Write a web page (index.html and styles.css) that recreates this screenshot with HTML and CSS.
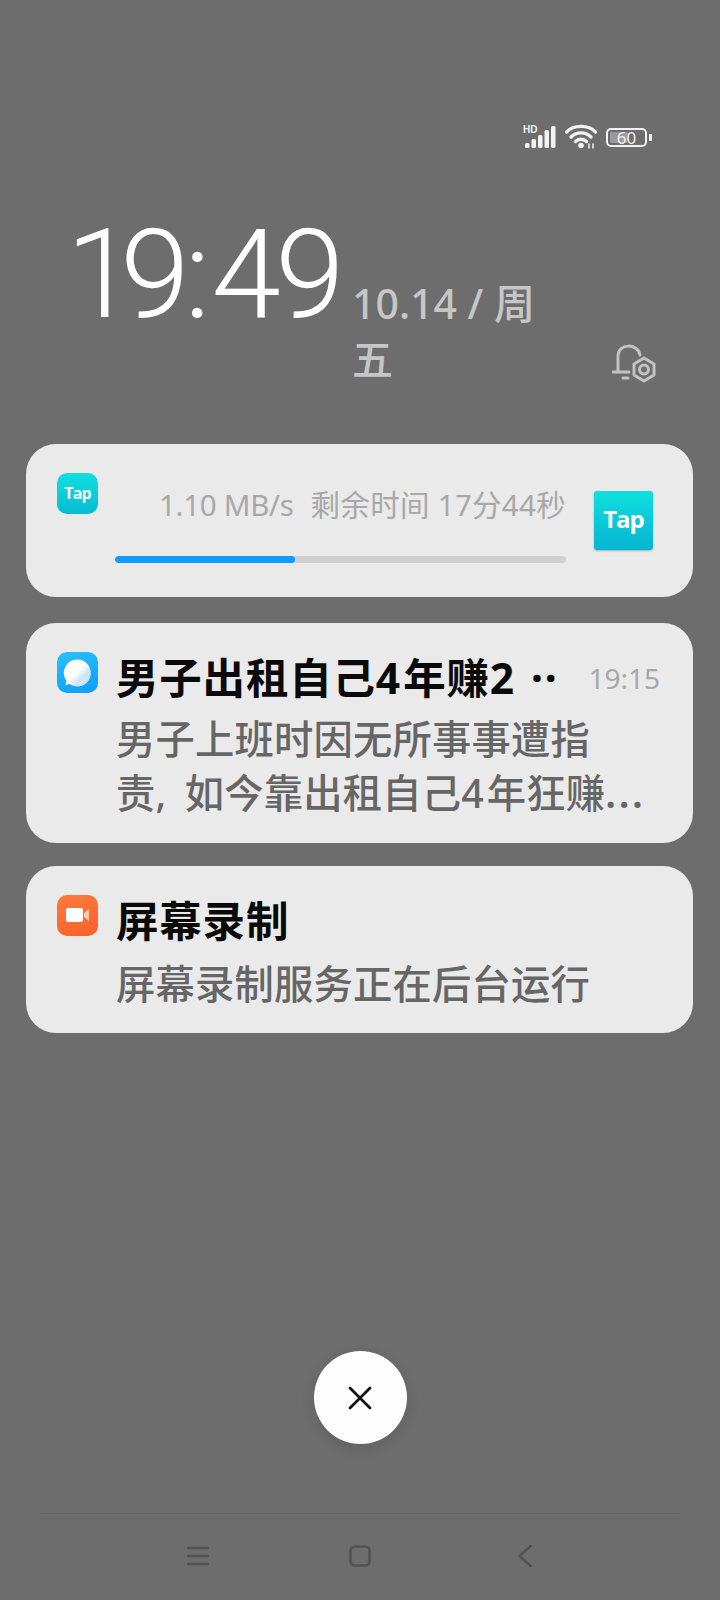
FILE: index.html
```html
<!DOCTYPE html>
<html lang="zh-CN">
  <head>
    <meta charset="UTF-8" />
    <title>通知中心</title>
    <link rel="stylesheet" href="styles.css">
  </head>
  <body>
    <div class="screen">
      <div class="status-bar">
        <svg class="signal" width="33" height="26" viewBox="0 0 33 26">
          <text x="0" y="9" class="hd">HD</text>
          <rect x="2" y="19" width="4.500" height="5" rx="1.500" />
          <rect x="8.500" y="15" width="4.500" height="9" rx="1.500" />
          <rect x="15" y="11" width="4.500" height="13" rx="1.500" />
          <rect x="21.500" y="6" width="4.500" height="18" rx="1.500" />
          <rect x="28" y="2" width="4.500" height="22" rx="1.500" />
        </svg>
        <svg class="wifi" width="32" height="26" viewBox="0 0 32 26">
          <path d="M1.500 8 C8.500 0.500 23.500 0.500 30.500 8" />
          <path d="M6 13 C11 7.500 21 7.500 26 13" />
          <path d="M10.500 17.500 C13.500 14.500 18.500 14.500 21.500 17.500" />
          <circle cx="16" cy="21.500" r="2.800" class="solid" />
          <path class="data" d="M24 20 V24 M28 20 V24" />
        </svg>
        <div class="battery">
          <div class="battery-body">
            <div class="battery-fill"></div>
            <span class="battery-num">60</span>
          </div>
          <div class="battery-tip"></div>
        </div>
      </div>

      <div class="clock-row">
        <div class="clock"><span class="clock-one">1</span>9<span class="clock-colon">:</span>49</div>
        <div class="date">10.14 / 周五</div>
        <svg class="bell" width="44" height="44" viewBox="0 0 44 44">
          <path d="M6 29 V14 C6 1 26 1 28 13" />
          <path d="M1 30 H17" />
          <path d="M11 36 H16" />
          <path d="M32 16 L42 22 V33 L32 39 L22 33 V22 Z" />
          <circle cx="32" cy="27.500" r="4.500" />
        </svg>
      </div>

      <section class="card card-download">
        <div class="app-icon tap-icon">Tap</div>
        <div class="download-main">
          <div class="download-text"><span class="speed">1.10 MB/s</span><span>剩余时间 17分44秒</span></div>
          <div class="progress"><div class="progress-fill"></div></div>
        </div>
        <div class="tap-large">Tap</div>
      </section>

      <section class="card card-news">
        <div class="app-icon news-icon">
          <svg width="41" height="41" viewBox="0 0 41 41">
            <defs>
              <linearGradient id="bubble" x1="0.150" y1="0.150" x2="0.950" y2="0.950">
                <stop offset="0.400" stop-color="#ffffff" />
                <stop offset="0.650" stop-color="#cfe6f8" />
              </linearGradient>
            </defs>
            <path d="M20 7.500 A13.500 13.500 0 1 1 12.500 32 L8.500 33 L9.500 29 A13.500 13.500 0 0 1 20 7.500 Z" fill="url(#bubble)" />
          </svg>
        </div>
        <div class="card-body news-body">
          <div class="title-row">
            <h2 class="title">男子出租自己<span class="num">4</span>年赚<span class="num">2</span> <span class="dots">··</span></h2>
            <span class="time">19:15</span>
          </div>
          <p class="message">男子上班时因无所事事遭指<br>责, 如今靠出租自己<span class="num">4</span>年狂赚<span class="ellipsis">...</span></p>
        </div>
      </section>

      <section class="card card-record">
        <div class="app-icon record-icon">
          <svg width="41" height="41" viewBox="0 0 41 41">
            <rect x="9" y="13" width="17" height="14" rx="2" fill="#ffffff" />
            <path d="M27 18 L32 14 V26 L27 22 Z" fill="#ffc9b2" />
          </svg>
        </div>
        <div class="card-body">
          <h2 class="title">屏幕录制</h2>
          <p class="message record-message">屏幕录制服务正在后台运行</p>
        </div>
      </section>

      <button class="close-btn" type="button" aria-label="关闭">
        <svg width="24" height="24" viewBox="0 0 24 24">
          <path d="M2 2 L22 22 M22 2 L2 22" />
        </svg>
      </button>

      <nav class="nav-bar">
        <svg width="22" height="20" viewBox="0 0 22 20"><path d="M1 2 H21 M1 10 H21 M1 18 H21" /></svg>
        <svg width="22" height="22" viewBox="0 0 22 22"><rect x="1.500" y="1.500" width="19" height="19" rx="4" /></svg>
        <svg width="22" height="22" viewBox="0 0 22 22"><path d="M20.500 1 L9.500 11 L20.500 21" /></svg>
      </nav>
    </div>
  </body>
</html>
```

FILE: styles.css
```css
body {
  margin: 0;
  background: #6d6d6d;
  font-family: "Noto Sans", "Noto Sans CJK SC", sans-serif;
}
.screen {
  width: 720px;
  height: 1600px;
  display: flex;
  flex-direction: column;
  overflow: hidden;
}
.status-bar {
  display: flex;
  justify-content: flex-end;
  align-items: center;
  gap: 9px;
  height: 26px;
  margin-top: 124px;
  padding-right: 68px;
}
.signal rect {
  fill: #f2f2f2;
}
.hd {
  font-family: "Liberation Sans", sans-serif;
  font-size: 10px;
  font-weight: 700;
  fill: #f2f2f2;
}
.wifi path {
  fill: none;
  stroke: #f2f2f2;
  stroke-width: 3.400;
  stroke-linecap: round;
}
.wifi .data {
  stroke-width: 1.500;
}
.wifi .solid {
  fill: #f2f2f2;
}
.battery {
  display: flex;
  align-items: center;
  gap: 2px;
}
.battery-body {
  position: relative;
  width: 33px;
  height: 11px;
  padding: 2px;
  border: 2.500px solid #f2f2f2;
  border-radius: 5px;
}
.battery-fill {
  width: 55%;
  height: 100%;
  background: #9a9a9a;
  border-radius: 2px;
}
.battery-num {
  position: absolute;
  inset: 0;
  text-align: center;
  font-size: 17px;
  line-height: 15px;
  color: #f2f2f2;
}
.battery-tip {
  width: 3px;
  height: 7px;
  background: #f2f2f2;
  border-radius: 1px;
}
.clock-row {
  display: flex;
  align-items: flex-end;
  height: 294px;
  padding-left: 66px;
  padding-bottom: 57px;
  box-sizing: border-box;
}
.clock {
  flex: none;
  width: 286px;
  font-family: Roboto, sans-serif;
  font-weight: 300;
  font-size: 125px;
  line-height: 134px;
  letter-spacing: -5.500px;
  color: #ffffff;
  align-self: flex-start;
  margin-top: 58px;
}
.clock-one {
  letter-spacing: -15px;
}
.clock-colon {
  letter-spacing: 1px;
}
.date {
  flex: none;
  width: 190px;
  font-size: 41px;
  font-weight: 500;
  line-height: 56px;
  color: #c6c6c6;
}
.bell {
  margin-left: 70px;
  margin-bottom: 1px;
}
.bell path,
.bell circle {
  fill: none;
  stroke: #c2c2c2;
  stroke-width: 3;
  stroke-linecap: round;
  stroke-linejoin: round;
}
.card {
  display: flex;
  box-sizing: border-box;
  margin-left: 26px;
  width: 667px;
  background: #eaeaea;
  border-radius: 30px;
  padding: 29px 0 0 31px;
}
.app-icon {
  flex: none;
  width: 41px;
  height: 41px;
  border-radius: 10px;
  overflow: hidden;
}
.tap-icon {
  background: linear-gradient(180deg, #12dfdf, #05bcd4);
  color: #fff;
  font-family: "Open Sans", sans-serif;
  font-size: 16px;
  font-weight: 700;
  letter-spacing: -0.800px;
  line-height: 40px;
  text-align: center;
}
.news-icon {
  background: linear-gradient(160deg, #25c2fb, #0f9cf6);
}
.record-icon {
  background: linear-gradient(160deg, #ff7a3c, #f9602b);
}
.card-download {
  height: 153px;
}
.download-main {
  width: 451px;
  margin-left: 17px;
  padding-top: 12px;
}
.download-text {
  display: flex;
  justify-content: flex-end;
  gap: 17px;
  font-size: 29.500px;
  letter-spacing: 0.300px;
  line-height: 40px;
  color: #a8a8a8;
}
.speed {
  letter-spacing: -0.300px;
}
.progress {
  margin-top: 31px;
  height: 7px;
  background: #d0d0d0;
  border-radius: 4px;
  overflow: hidden;
}
.progress-fill {
  width: 40%;
  height: 100%;
  background: #0f9bf7;
  border-radius: 4px;
}
.tap-large {
  flex: none;
  width: 59px;
  height: 59px;
  margin: 18px 0 0 28px;
  border-radius: 3px;
  background: linear-gradient(180deg, #0fe0de, #06b4d2);
  box-shadow: 0 1px 2px rgba(0, 0, 0, 0.25);
  color: #fff;
  font-family: "Open Sans", sans-serif;
  font-size: 24px;
  font-weight: 700;
  letter-spacing: -1px;
  line-height: 56px;
  text-align: center;
}
.card-news {
  height: 220px;
  margin-top: 26px;
}
.card-record {
  height: 167px;
  margin-top: 23px;
}
.card-body {
  flex: 1;
  margin-left: 18px;
  min-width: 0;
}
.news-body {
  padding-right: 33px;
}
.title-row {
  display: flex;
  align-items: center;
  justify-content: space-between;
}
.title {
  margin: 0;
  font-size: 42.500px;
  font-weight: 700;
  letter-spacing: 0.800px;
  line-height: 52px;
  color: #0a0a0a;
  white-space: nowrap;
}
.num {
  letter-spacing: 3px;
}
.dots {
  margin-left: 2px;
  letter-spacing: 2px;
}
.time {
  font-size: 28px;
  color: #a8a8a8;
}
.message {
  margin: 8px 0 0;
  font-size: 39.300px;
  font-weight: 500;
  letter-spacing: 0.200px;
  word-spacing: 8px;
  line-height: 54px;
  color: #666666;
  white-space: nowrap;
}
.record-message {
  margin-top: 9.500px;
}
.ellipsis {
  font-weight: 600;
  letter-spacing: 2.500px;
}
.close-btn {
  align-self: center;
  width: 93px;
  height: 93px;
  margin-top: 318px;
  border: none;
  border-radius: 50%;
  background: #fdfdfd;
  box-shadow: 0 4px 14px rgba(0, 0, 0, 0.12);
  padding: 0;
  display: flex;
  align-items: center;
  justify-content: center;
}
.close-btn path {
  fill: none;
  stroke: #111;
  stroke-width: 2.800;
  stroke-linecap: round;
}
.nav-bar {
  display: flex;
  justify-content: space-between;
  align-items: center;
  margin: 69px 40px 0;
  height: 84px;
  padding: 0 148px 0 147px;
  border-top: 1px solid #656565;
}
.nav-bar path,
.nav-bar rect {
  fill: none;
  stroke: #525252;
  stroke-width: 2.500;
  stroke-linecap: round;
  stroke-linejoin: round;
}
```
